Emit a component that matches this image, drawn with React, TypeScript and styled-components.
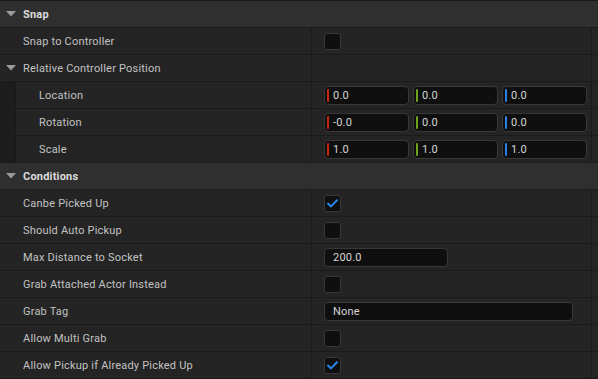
import React from "react"
import styled, { createGlobalStyle } from "styled-components"

const GlobalStyle = createGlobalStyle`
    html, body {
        margin: 0;
        padding: 0;
        background: #242424;
    }
    body {
        font-family: Roboto, "Noto Sans", "Liberation Sans", sans-serif;
        font-size: 11px;
        letter-spacing: 0.2px;
    }
`

const rowHeight = 26
const lineColor = "#1a1a1a"

const Panel = styled.div`
    width: 598px;
    border-top: 1px solid ${lineColor};
    background: #242424;
`

const CategoryRow = styled.div`
    height: ${rowHeight}px;
    display: flex;
    align-items: center;
    background: #2f2f2f;
    border-bottom: 1px solid ${lineColor};
    color: #dcdcdc;
    font-weight: 700;
`

const PropRow = styled.div`
    height: ${rowHeight}px;
    display: grid;
    grid-template-columns: 312px 280px 1fr;
    border-bottom: 1px solid ${lineColor};
    background: #242424;
`

const NameCell = styled.div<{ $nested?: boolean }>`
    display: flex;
    align-items: center;
    box-sizing: border-box;
    border-right: 1px solid ${lineColor};
    color: #c2c2c2;
    white-space: nowrap;
    padding-left: ${(p) => (p.$nested ? 0 : 23)}px;
`

const IndentStrip = styled.div`
    align-self: stretch;
    width: 15px;
    background: #1d1d1d;
    border-right: 1px solid #191919;
    margin-right: 23px;
`

const ValueCell = styled.div`
    display: flex;
    align-items: center;
    gap: 4px;
    box-sizing: border-box;
    border-right: 1px solid ${lineColor};
    padding-left: 12px;
`

const ArrowBox = styled.span`
    width: 23px;
    display: flex;
    justify-content: center;
    padding-right: 2px;
    box-sizing: border-box;
`

const Label = styled.span`
    line-height: 1;
`

const Checkbox = styled.div`
    width: 17px;
    height: 17px;
    box-sizing: border-box;
    border: 1px solid #383838;
    border-radius: 3px;
    background: #0f0f0f;
    display: flex;
    align-items: center;
    justify-content: center;
`

const Field = styled.div<{ $width: number }>`
    width: ${(p) => p.$width}px;
    height: 19px;
    box-sizing: border-box;
    border: 1px solid #383838;
    border-radius: 4px;
    background: #0f0f0f;
    display: flex;
    align-items: center;
    padding-left: 2px;
    color: #d6d6d6;
`

const AxisBar = styled.span<{ $color: string }>`
    width: 2px;
    height: 13px;
    border-radius: 1px;
    background: ${(p) => p.$color};
    margin-right: 4px;
`

const FieldText = styled.span<{ $indent?: number }>`
    padding-left: ${(p) => p.$indent ?? 0}px;
`

const Arrow = () => (
    <ArrowBox>
        <svg width="10" height="6" viewBox="0 0 10 6">
            <path d="M0 0 H10 L5 5.5 Z" fill="#9a9a9a" />
        </svg>
    </ArrowBox>
)

const Check = () => (
    <svg width="11" height="9" viewBox="0 0 11 9">
        <path
            d="M1 4.6 L4 7.4 L10 1.2"
            fill="none"
            stroke="#2a86ec"
            strokeWidth="2"
            strokeLinecap="round"
            strokeLinejoin="round"
        />
    </svg>
)

const axisColors = ["#c8290e", "#6da41b", "#2d7fe8"]

const VectorValue: React.FC<{ values: string[] }> = ({ values }) => (
    <>
        {values.map((v, i) => (
            <Field key={i} $width={85}>
                <AxisBar $color={axisColors[i]} />
                <FieldText>{v}</FieldText>
            </Field>
        ))}
    </>
)

type Prop = {
    name: string
    nested?: boolean
    group?: boolean
    value?: React.ReactNode
}

const Row: React.FC<Prop> = ({ name, nested, group, value }) => (
    <PropRow>
        <NameCell $nested={nested || group}>
            {nested && <IndentStrip />}
            {group && <Arrow />}
            <Label>{name}</Label>
        </NameCell>
        <ValueCell>{value}</ValueCell>
        <div />
    </PropRow>
)

const Category: React.FC<{ title: string }> = ({ title }) => (
    <CategoryRow>
        <Arrow />
        <Label>{title}</Label>
    </CategoryRow>
)

const box = (checked: boolean) => <Checkbox>{checked && <Check />}</Checkbox>

export default function App() {
    return (
        <Panel>
            <GlobalStyle />
            <Category title="Snap" />
            <Row name="Snap to Controller" value={box(false)} />
            <Row name="Relative Controller Position" group />
            <Row name="Location" nested value={<VectorValue values={["0.0", "0.0", "0.0"]} />} />
            <Row name="Rotation" nested value={<VectorValue values={["-0.0", "0.0", "0.0"]} />} />
            <Row name="Scale" nested value={<VectorValue values={["1.0", "1.0", "1.0"]} />} />
            <Category title="Conditions" />
            <Row name="Canbe Picked Up" value={box(true)} />
            <Row name="Should Auto Pickup" value={box(false)} />
            <Row
                name="Max Distance to Socket"
                value={
                    <Field $width={124}>
                        <FieldText $indent={6}>200.0</FieldText>
                    </Field>
                }
            />
            <Row name="Grab Attached Actor Instead" value={box(false)} />
            <Row
                name="Grab Tag"
                value={
                    <Field $width={249}>
                        <FieldText $indent={6}>None</FieldText>
                    </Field>
                }
            />
            <Row name="Allow Multi Grab" value={box(false)} />
            <Row name="Allow Pickup if Already Picked Up" value={box(true)} />
        </Panel>
    )
}
